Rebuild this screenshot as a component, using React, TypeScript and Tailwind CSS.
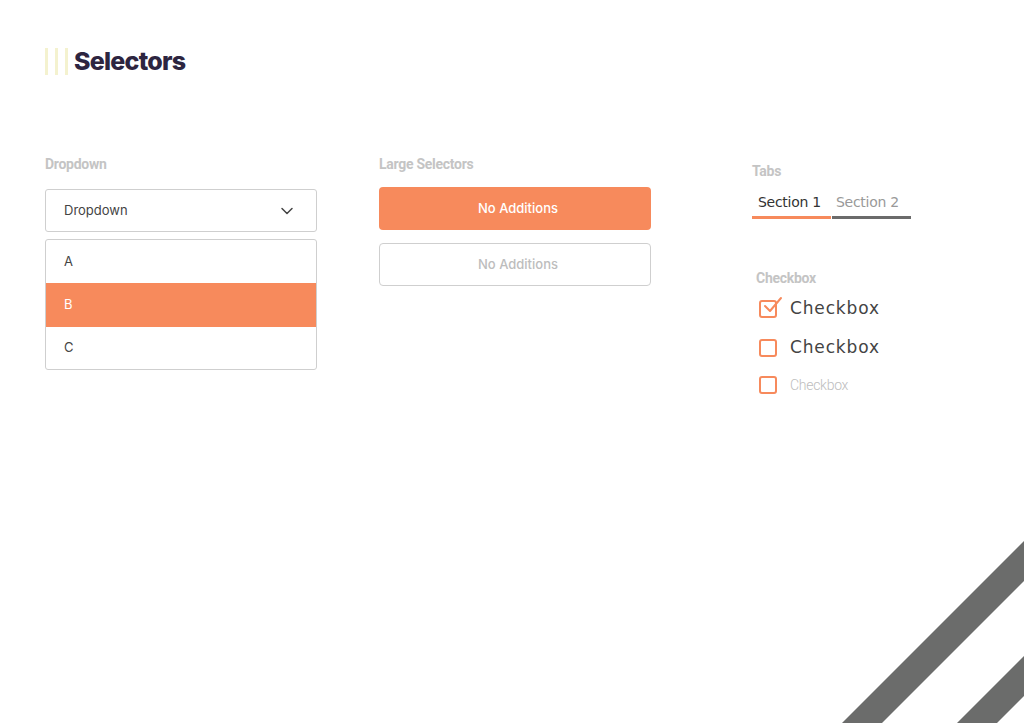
import { ChevronDown } from 'lucide-react';

const label = 'text-[14px] font-bold text-[#c4c4c4] tracking-[-0.02em] [font-family:Roboto,sans-serif]';
const wide = '[font-family:"DejaVu_Sans",sans-serif]';

function Dropdown() {
  return (
    <div className="w-[272px]">
      <div className={`${label} h-[20px] leading-[20px] mt-[-3px]`}>Dropdown</div>
      <div className="mt-[15px] h-[43px] rounded-[3px] border border-[#cfcfcf] flex items-center justify-between pl-[18px] pr-[19px] text-[13px] text-[#444] [font-family:Inter,sans-serif]">
        <span>Dropdown</span>
        <ChevronDown className="w-[20px] h-[20px] text-[#444]" strokeWidth={1.8} />
      </div>
      <div className="mt-[7px] rounded-[3px] border border-[#cfcfcf] overflow-hidden text-[13px] [font-family:Inter,sans-serif]">
        <div className="h-[43px] flex items-center pl-[18px] text-[#444]">A</div>
        <div className="h-[44px] flex items-center pl-[18px] text-white bg-[#f78a5c]">B</div>
        <div className="h-[42px] flex items-center pl-[18px] text-[#444]">C</div>
      </div>
    </div>
  );
}

function LargeSelectors() {
  return (
    <div className="w-[272px]">
      <div className={`${label} h-[20px] leading-[20px] mt-[-3px]`}>Large Selectors</div>
      <div className="mt-[13px] h-[43px] pl-[6px] rounded-[4px] bg-[#f78a5c] flex items-center justify-center text-white text-[13px] font-medium [font-family:Inter,sans-serif]">
        No Additions
      </div>
      <div className="mt-[13px] h-[43px] pl-[6px] rounded-[4px] border border-[#cfcfcf] flex items-center justify-center text-[#bdbdbd] text-[13px] font-medium [font-family:Inter,sans-serif]">
        No Additions
      </div>
    </div>
  );
}

function Box({ checked }: { checked?: boolean }) {
  return (
    <div className="relative w-[18px] h-[18px] shrink-0 rounded-[3px] border-2 border-[#f78a5c]">
      {checked && (
        <svg className="absolute left-[1px] top-[-7px]" width="22" height="22" viewBox="0 0 22 22" fill="none">
          <path d="M3 11 L8 16 L19 3" stroke="#f78a5c" strokeWidth="2" strokeLinecap="round" strokeLinejoin="round" />
        </svg>
      )}
    </div>
  );
}

function TabsAndChecks() {
  return (
    <div className="w-[200px]">
      <div className={`${label} h-[20px] leading-[20px] mt-[4px]`}>Tabs</div>
      <div className="mt-[12px] flex">
        <div className="w-[79px]">
          <div className={`${wide} text-[14px] text-[#333] pl-[6px] tracking-[-0.02em] h-[18px] leading-[18px]`}>Section 1</div>
          <div className="mt-[5px] h-[3px] bg-[#f78a5c]" />
        </div>
        <div className="w-[79px] ml-px">
          <div className={`${wide} text-[14px] text-[#999] pl-[4px] tracking-[-0.02em] h-[18px] leading-[18px]`}>Section 2</div>
          <div className="mt-[5px] h-[3px] bg-[#6b6b6b]" />
        </div>
      </div>
      <div className={`${label} h-[20px] leading-[20px] mt-[49px] pl-[4px]`}>Checkbox</div>
      <div className="mt-[12px] pl-[7px] flex flex-col">
        <div className="h-[18px] flex items-center gap-[13px]">
          <Box checked />
          <span className={`${wide} text-[17px] text-[#444] tracking-[0.05em]`}>Checkbox</span>
        </div>
        <div className="mt-[21px] h-[18px] flex items-center gap-[13px]">
          <Box />
          <span className={`${wide} text-[17px] text-[#444] tracking-[0.05em]`}>Checkbox</span>
        </div>
        <div className="mt-[19px] h-[18px] flex items-center gap-[13px]">
          <Box />
          <span className="text-[14px] font-light text-[#bdbdbd] [font-family:Roboto,sans-serif] tracking-[-0.02em]">Checkbox</span>
        </div>
      </div>
    </div>
  );
}

export default function App() {
  return (
    <div className="relative w-[1024px] h-[723px] bg-white overflow-hidden">
      <div className="pt-[48px] pl-[45px] flex items-center">
        <div className="flex gap-[7px] h-[27px]">
          <div className="w-[3px] bg-[#f4f2cf]" />
          <div className="w-[3px] bg-[#f4f2cf]" />
          <div className="w-[3px] bg-[#f4f2cf]" />
        </div>
        <h1 className="ml-[6px] text-[25px] font-extrabold text-[#2d2540] tracking-[-0.03em] [font-family:Inter,sans-serif] leading-none">
          Selectors
        </h1>
      </div>

      <div className="mt-[82px] pl-[45px] flex">
        <Dropdown />
        <div className="ml-[62px]">
          <LargeSelectors />
        </div>
        <div className="ml-[101px]">
          <TabsAndChecks />
        </div>
      </div>

      <svg className="absolute right-0 bottom-0" width="182" height="183" viewBox="0 0 182 183">
        <polygon points="0,183 40,183 182,41 182,1" fill="#6b6c6b" />
        <polygon points="115,183 155,183 182,156 182,116" fill="#6b6c6b" />
      </svg>
    </div>
  );
}
